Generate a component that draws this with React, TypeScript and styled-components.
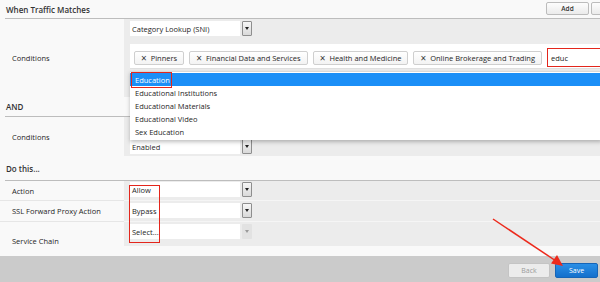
import React from "react";
import styled, { createGlobalStyle } from "styled-components";

const GlobalStyle = createGlobalStyle`
  html, body { margin: 0; padding: 0; background: #f8f8f8; }
  body {
    font-family: "Open Sans", "DejaVu Sans", sans-serif;
    font-size: 7.5px;
    color: #262626;
  }
  * { box-sizing: border-box; }
`;

const Page = styled.div`
  position: relative;
  width: 600px;
  height: 282px;
  overflow: hidden;
  background: #f9f9f9;
  display: flex;
  flex-direction: column;
`;

const SectionHead = styled.div<{ $h: number }>`
  height: ${(p) => p.$h}px;
  margin-left: 5px;
  padding-left: 1px;
  border-bottom: 1px solid #bdbdbd;
  display: flex;
  align-items: center;
  justify-content: space-between;
  font-size: 8px;
  font-weight: 600;
  color: #333;
  flex-shrink: 0;
`;

const HeadActions = styled.div`
  display: flex;
  gap: 2px;
  margin-right: -34px;
  align-self: flex-start;
  padding-top: 2px;
`;

const SmallButton = styled.button`
  width: 43px;
  height: 13px;
  padding: 0;
  border: 1px solid #bcbcbc;
  border-radius: 2px;
  background: linear-gradient(#fdfdfd, #ebebeb);
  font-family: inherit;
  font-size: 6.5px;
  font-weight: 600;
  color: #333;
`;

const Row = styled.div<{ $h: number }>`
  display: flex;
  height: ${(p) => p.$h}px;
  flex-shrink: 0;
`;

const LabelCell = styled.div<{ $end?: boolean; $line?: boolean }>`
  width: 124px;
  flex-shrink: 0;
  padding-left: 12px;
  display: flex;
  align-items: ${(p) => (p.$end ? "flex-end" : "center")};
  padding-bottom: ${(p) => (p.$end ? "7px" : "0")};
  border-bottom: ${(p) => (p.$line ? "1px solid #e6e6e6" : "none")};
`;

const FieldCell = styled.div<{ $top: number; $line?: boolean; $short?: boolean }>`
  position: relative;
  flex: 1;
  align-self: flex-start;
  height: ${(p) => (p.$short ? "24px" : "100%")};
  background: #ececec;
  padding: ${(p) => p.$top}px 0 0 6px;
  border-bottom: ${(p) => (p.$line ? "1px solid #f5f5f5" : "none")};
`;

const SelectBox = styled.div`
  display: flex;
  gap: 2px;
  width: 122px;
  height: 15px;
`;

const SelectValue = styled.div`
  flex: 1;
  background: #fff;
  padding-left: 2px;
  display: flex;
  align-items: center;
  white-space: nowrap;
`;

const SelectArrow = styled.div<{ $disabled?: boolean }>`
  width: 10px;
  height: 15px;
  border: ${(p) => (p.$disabled ? "none" : "1px solid #8e8e8e")};
  border-radius: 1px;
  background: ${(p) => (p.$disabled ? "#e2e2e2" : "linear-gradient(#f6f6f6, #d9d9d9)")};
  display: flex;
  align-items: center;
  justify-content: center;

  &::after {
    content: "";
    border-left: 2.5px solid transparent;
    border-right: 2.5px solid transparent;
    border-top: 3px solid ${(p) => (p.$disabled ? "#9a9a9a" : "#222")};
  }
`;

const TagBox = styled.div`
  margin-top: 8px;
  height: 25px;
  background: #fff;
  border-bottom: 1px solid #e0e0e0;
  display: flex;
  align-items: flex-start;
  padding: 3px 0 0 4px;
  gap: 5px;
`;

const Tag = styled.div`
  height: 14px;
  margin-top: 4px;
  padding: 0 6px 0 6px;
  border: 1px solid #cfcfcf;
  border-radius: 2px;
  background: linear-gradient(#ffffff, #f3f3f3);
  display: flex;
  align-items: center;
  gap: 4px;
  white-space: nowrap;
`;

const TagX = styled.span`
  font-size: 10px;
  line-height: 1;
  margin-top: -1px;
  color: #333;
`;

const SearchInput = styled.div`
  width: 55px;
  height: 19px;
  margin-top: 1px;
  border: 1.5px solid #e3261c;
  background: #fff;
  padding-left: 3px;
  display: flex;
  align-items: center;
  color: #222;
`;

const DropList = styled.div`
  position: absolute;
  left: 6px;
  right: 0;
  top: 52px;
  height: 69px;
  background: #fff;
  border-top: 1px solid #d8d8d8;
  padding-top: 1px;
  box-shadow: 0 2px 4px rgba(0, 0, 0, 0.25);
  z-index: 5;
`;

const DropItem = styled.div<{ $active?: boolean }>`
  height: 13px;
  padding-left: 5px;
  display: flex;
  align-items: center;
  background: ${(p) => (p.$active ? "#1b8ff7" : "transparent")};
  color: ${(p) => (p.$active ? "#fff" : "#262626")};
`;

const Marked = styled.span`
  height: 16px;
  margin-left: -4px;
  padding: 0 1px 0 3px;
  border: 1.5px solid #e3261c;
  display: flex;
  align-items: center;
`;

const Footer = styled.div`
  height: 26px;
  margin-top: auto;
  background: #cbcbcb;
  display: flex;
  justify-content: flex-end;
  align-items: flex-end;
  gap: 5px;
  padding: 0 2px 4px 0;
`;

const FooterButton = styled.button<{ $primary?: boolean }>`
  width: ${(p) => (p.$primary ? "43px" : "42px")};
  height: 15px;
  padding: 0;
  border-radius: 2px;
  border: 1px solid ${(p) => (p.$primary ? "#1565b8" : "#c4c4c4")};
  background: ${(p) => (p.$primary ? "linear-gradient(#2a8fe6, #1370cc)" : "#ececec")};
  color: ${(p) => (p.$primary ? "#fff" : "#9a9a9a")};
  font-family: inherit;
  font-size: 7px;
`;

const Highlight = styled.div`
  position: absolute;
  left: 129px;
  top: 185px;
  width: 31px;
  height: 58px;
  border: 1.5px solid #e3261c;
  pointer-events: none;
`;

const Overlay = styled.svg`
  position: absolute;
  left: 0;
  top: 0;
  pointer-events: none;
`;

type SelectProps = { value: string; disabled?: boolean };

const Select = ({ value, disabled }: SelectProps) => (
  <SelectBox>
    <SelectValue>{value}</SelectValue>
    <SelectArrow $disabled={disabled} />
  </SelectBox>
);

const tags = ["Pinners", "Financial Data and Services", "Health and Medicine", "Online Brokerage and Trading"];
const matches = ["Educational Institutions", "Educational Materials", "Educational Video", "Sex Education"];

export default function App() {
  return (
    <>
      <GlobalStyle />
      <Page>
        <SectionHead $h={19}>
          When Traffic Matches
          <HeadActions>
            <SmallButton>Add</SmallButton>
            <SmallButton aria-label="Delete" />
          </HeadActions>
        </SectionHead>
        <Row $h={78}>
          <LabelCell>Conditions</LabelCell>
          <FieldCell $top={2}>
            <Select value="Category Lookup (SNI)" />
            <TagBox>
              {tags.map((t) => (
                <Tag key={t}>
                  <TagX>×</TagX>
                  {t}
                </Tag>
              ))}
              <SearchInput>educ</SearchInput>
            </TagBox>
            <DropList>
              <DropItem $active>
                <Marked>Education</Marked>
              </DropItem>
              {matches.map((m) => (
                <DropItem key={m}>{m}</DropItem>
              ))}
            </DropList>
          </FieldCell>
        </Row>
        <SectionHead $h={20}>AND</SectionHead>
        <Row $h={39}>
          <LabelCell>Conditions</LabelCell>
          <FieldCell $top={22}>
            <Select value="Enabled" />
          </FieldCell>
        </Row>
        <SectionHead $h={25}>Do this...</SectionHead>
        <Row $h={20}>
          <LabelCell $line>Action</LabelCell>
          <FieldCell $top={1} $line>
            <Select value="Allow" />
          </FieldCell>
        </Row>
        <Row $h={21}>
          <LabelCell $line>SSL Forward Proxy Action</LabelCell>
          <FieldCell $top={2} $line>
            <Select value="Bypass" />
          </FieldCell>
        </Row>
        <Row $h={31}>
          <LabelCell $end>Service Chain</LabelCell>
          <FieldCell $top={2} $short>
            <Select value="Select..." disabled />
          </FieldCell>
        </Row>
        <Footer>
          <FooterButton>Back</FooterButton>
          <FooterButton $primary>Save</FooterButton>
        </Footer>
        <Highlight />
        <Overlay width="600" height="282" viewBox="0 0 600 282">
          <line x1="493" y1="219" x2="556" y2="261" stroke="#ec2a1c" strokeWidth="1.5" />
          <polygon points="563,266 551,263.5 557,255" fill="#ec2a1c" />
        </Overlay>
      </Page>
    </>
  );
}
